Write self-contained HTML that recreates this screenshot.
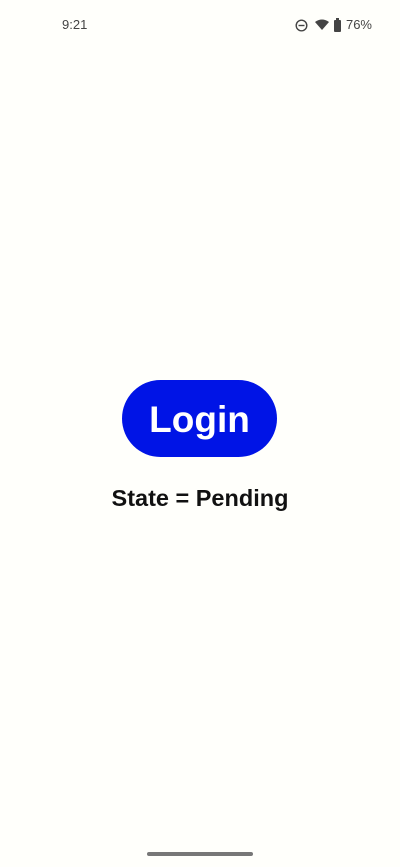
<!DOCTYPE html>
<html><head><meta charset="utf-8"><style>
html,body{margin:0;padding:0;width:400px;height:867px;background:#fffffb;overflow:hidden;font-family:"Liberation Sans",sans-serif;position:relative}
.t{position:absolute;left:62px;top:17px;font-size:13px;color:#444}
.r{position:absolute;right:28px;top:17px;font-size:13px;color:#444}
.btn{position:absolute;left:122px;top:380px;width:155px;height:77px;border-radius:39px;background:#0014e6;color:#fff;font-weight:bold;font-size:37px;text-align:center;line-height:79px}
.st{position:absolute;left:0;width:400px;top:485px;text-align:center;font-weight:bold;font-size:23.5px;color:#111}
.bar{position:absolute;left:147px;top:852px;width:106px;height:4px;border-radius:2px;background:#777}
</style></head><body>
<div class="t">9:21</div>
<svg style="position:absolute;left:295px;top:19px" width="13" height="13"><circle cx="6.5" cy="6.5" r="5.3" fill="none" stroke="#444" stroke-width="1.4"/><rect x="3.5" y="5.8" width="6" height="1.4" fill="#444"/></svg>
<svg style="position:absolute;left:315px;top:19px" width="14" height="12"><path d="M0 3 Q7 -2 14 3 L7 11 Z" fill="#444"/></svg>
<svg style="position:absolute;left:334px;top:18px" width="7" height="14"><rect x="2" y="0" width="3" height="2" fill="#444"/><rect x="0" y="2" width="7" height="12" rx="1" fill="#444"/></svg>
<div class="r">76%</div>
<div class="btn">Login</div>
<div class="st">State = Pending</div>
<div class="bar"></div>
</body></html>
